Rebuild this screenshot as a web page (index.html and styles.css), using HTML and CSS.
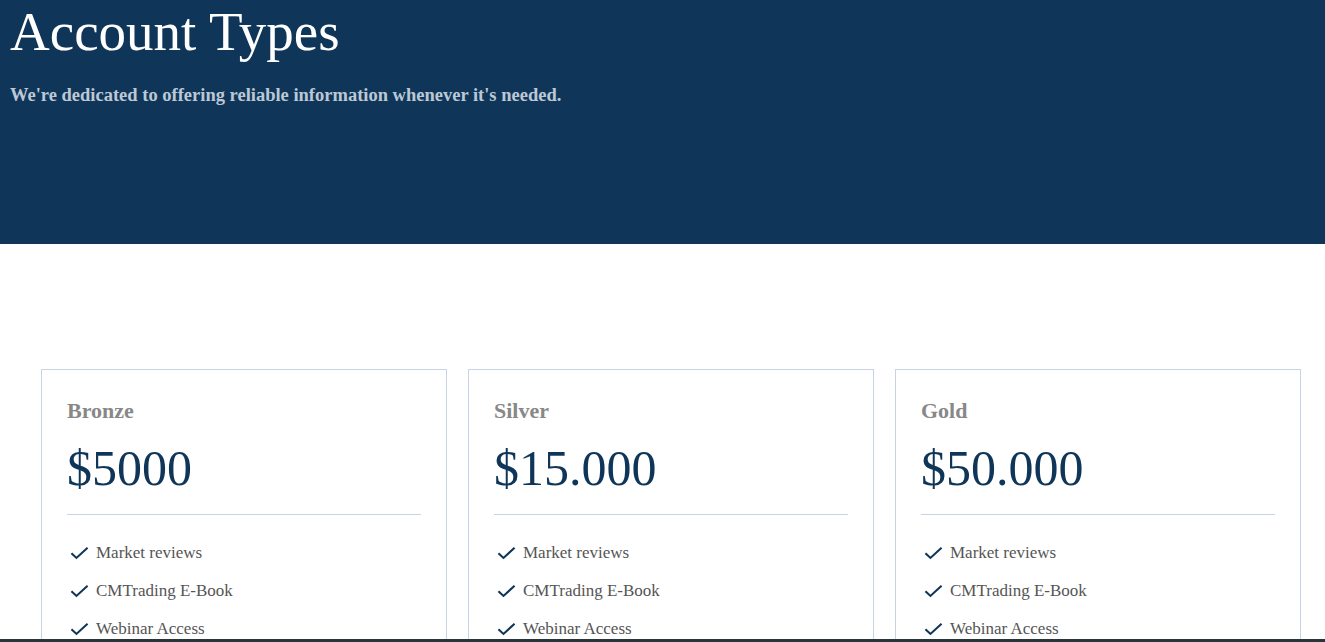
FILE: index.html
```html
<!DOCTYPE html>
<html lang="en">
  <head>
    <meta charset="utf-8">
    <meta name="viewport" content="width=device-width, initial-scale=1.0">
    <title>Account Types</title>
    <link rel="stylesheet" href="styles.css">
  </head>
  <body>
    <!-- page header -->
    <header class="hero">
      <h1 class="hero-title">Account Types</h1>
      <p class="hero-lead">We're dedicated to offering reliable information whenever it's needed.</p>
    </header>

    <!-- pricing cards -->
    <main class="plans">
      <section class="plan">
        <h2 class="plan-name">Bronze</h2>
        <div class="plan-price">$5000</div>
        <ul class="plan-features">
          <li><svg class="check" viewBox="0 0 20 14"><path d="M1.5 7.2 L6.8 12.2 L18.5 1.5"/></svg>Market reviews</li>
          <li><svg class="check" viewBox="0 0 20 14"><path d="M1.5 7.2 L6.8 12.2 L18.5 1.5"/></svg>CMTrading E-Book</li>
          <li><svg class="check" viewBox="0 0 20 14"><path d="M1.5 7.2 L6.8 12.2 L18.5 1.5"/></svg>Webinar Access</li>
        </ul>
      </section>
      <section class="plan">
        <h2 class="plan-name">Silver</h2>
        <div class="plan-price">$15.000</div>
        <ul class="plan-features">
          <li><svg class="check" viewBox="0 0 20 14"><path d="M1.5 7.2 L6.8 12.2 L18.5 1.5"/></svg>Market reviews</li>
          <li><svg class="check" viewBox="0 0 20 14"><path d="M1.5 7.2 L6.8 12.2 L18.5 1.5"/></svg>CMTrading E-Book</li>
          <li><svg class="check" viewBox="0 0 20 14"><path d="M1.5 7.2 L6.8 12.2 L18.5 1.5"/></svg>Webinar Access</li>
        </ul>
      </section>
      <section class="plan">
        <h2 class="plan-name">Gold</h2>
        <div class="plan-price">$50.000</div>
        <ul class="plan-features">
          <li><svg class="check" viewBox="0 0 20 14"><path d="M1.5 7.2 L6.8 12.2 L18.5 1.5"/></svg>Market reviews</li>
          <li><svg class="check" viewBox="0 0 20 14"><path d="M1.5 7.2 L6.8 12.2 L18.5 1.5"/></svg>CMTrading E-Book</li>
          <li><svg class="check" viewBox="0 0 20 14"><path d="M1.5 7.2 L6.8 12.2 L18.5 1.5"/></svg>Webinar Access</li>
        </ul>
      </section>
    </main>

    <div class="bottom-bar"></div>
  </body>
</html>
```
FILE: styles.css
```css
* {
  box-sizing: border-box;
}
html, body {
  margin: 0;
  padding: 0;
  background: #fff;
  font-family: "Liberation Serif", "DejaVu Serif", serif;
}

/* header */
.hero {
  background-color: #0f3658;
  height: 244px;
  padding: 4px 10px 0;
}
.hero-title {
  margin: 0;
  font-size: 55px;
  font-weight: 400;
  line-height: 1;
  color: #fff;
}
.hero-lead {
  margin: 24px 0 0;
  font-size: 18.5px;
  font-weight: 700;
  line-height: 25px;
  color: #bcc8d6;
}

/* cards */
.plans {
  display: grid;
  grid-template-columns: repeat(3, 406px);
  gap: 21px;
  padding: 125px 0 60px 41px;
}
.plan {
  border: 1px solid #c9d3e8;
  padding: 28px 25px 40px;
}
.plan-name {
  margin: 0;
  font-size: 22px;
  font-weight: 700;
  line-height: 26px;
  color: #888;
}
.plan-price {
  margin-top: 14px;
  padding-bottom: 16px;
  border-bottom: 1px solid #c9d3e8;
  font-size: 50px;
  line-height: 60px;
  color: #0f3658;
}
.plan-features {
  list-style: none;
  margin: 19px 0 0;
  padding: 0;
}
.plan-features li {
  display: flex;
  align-items: center;
  height: 38px;
  font-size: 17px;
  color: #555;
}
.check {
  width: 19px;
  height: 14px;
  margin: 0 7px 0 3px;
  fill: none;
  stroke: #0f3658;
  stroke-width: 2.2;
}

/* dark strip at the very bottom of the window */
.bottom-bar {
  position: fixed;
  left: 0;
  right: 0;
  bottom: 0;
  height: 3px;
  background: #28333a;
}
```
